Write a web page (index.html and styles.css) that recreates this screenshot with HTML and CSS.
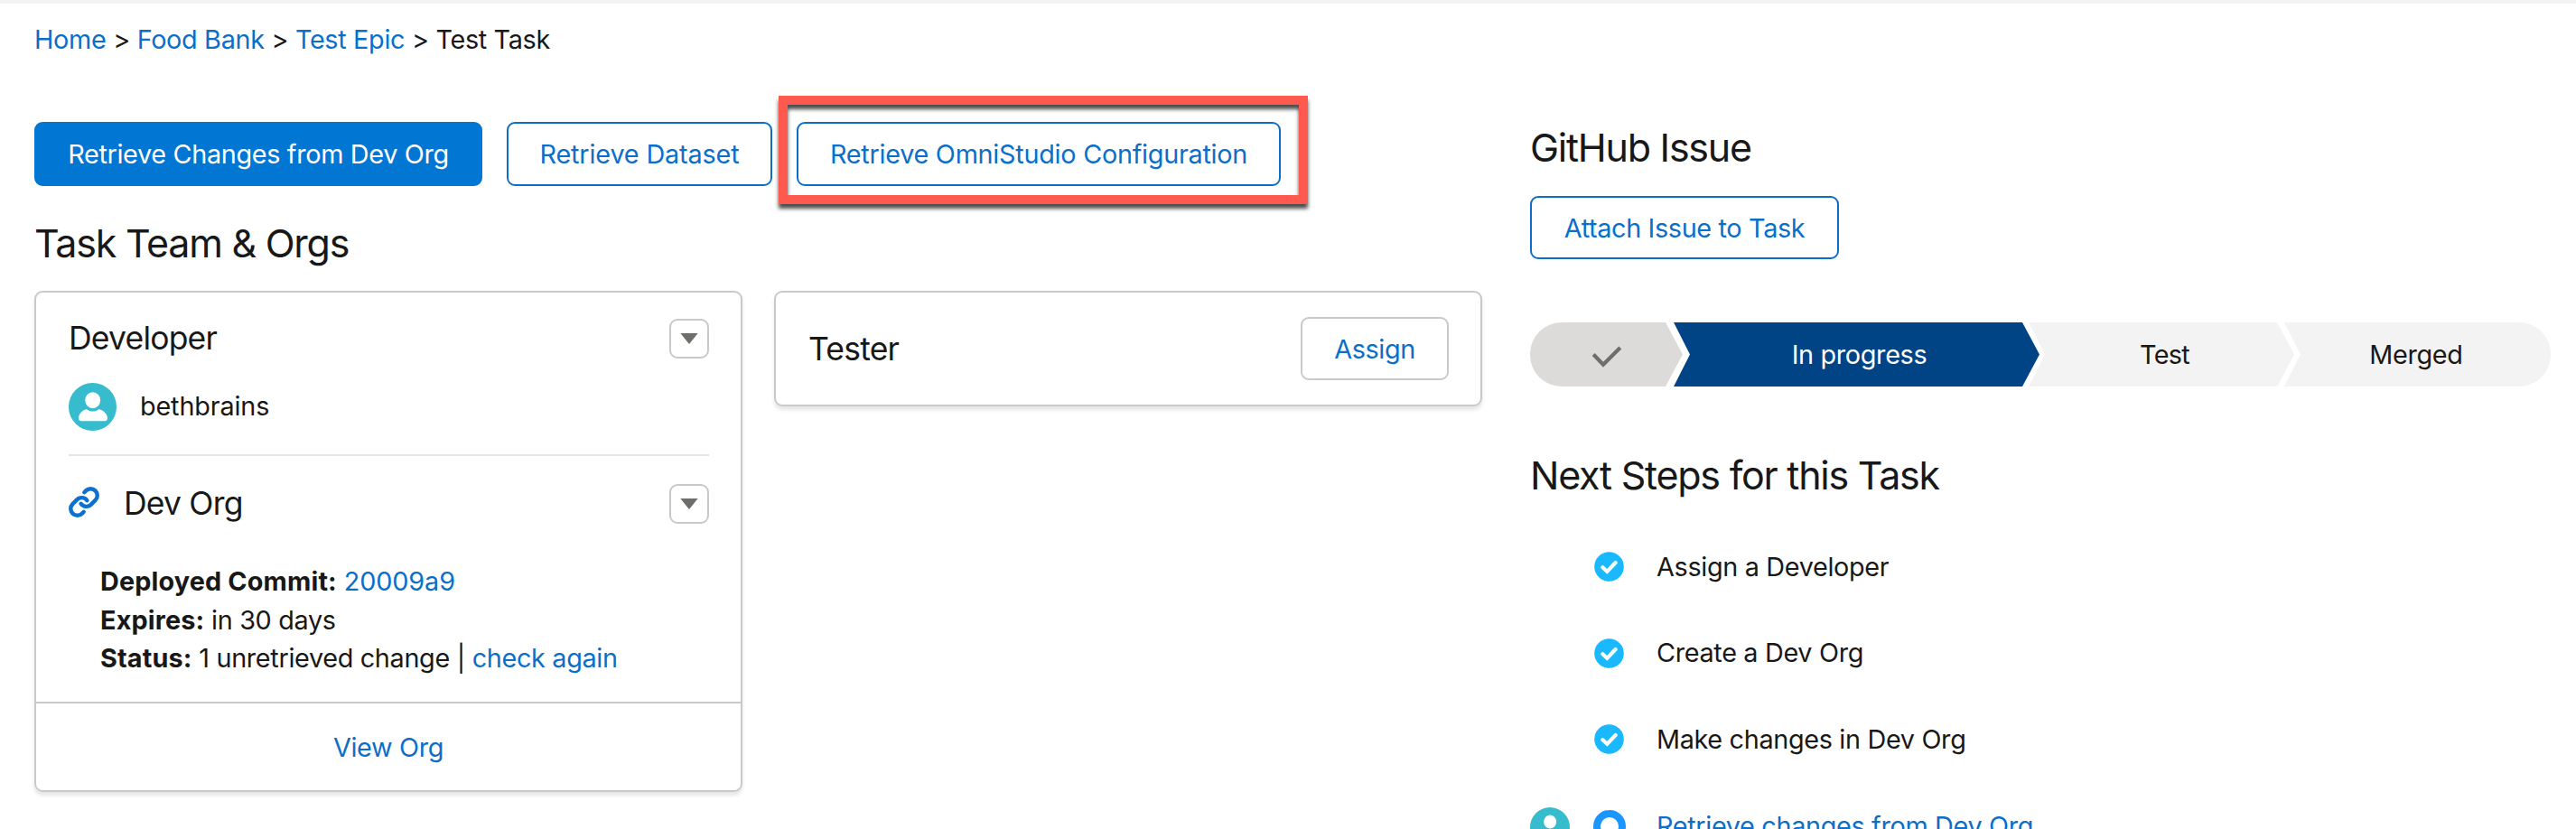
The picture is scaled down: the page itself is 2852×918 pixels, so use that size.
FILE: index.html
```
<!DOCTYPE html>
<html lang="en">
<head>
<meta charset="utf-8">
<title>Test Task</title>
<link rel="stylesheet" href="styles.css">
</head>
<body>
<svg class="defs" width="0" height="0">
  <symbol id="user" viewBox="0 0 53 53">
    <circle cx="26.5" cy="26.5" r="26.5" fill="#36bccc"/>
    <ellipse cx="26.7" cy="19.2" rx="8.4" ry="9" fill="#fff"/>
    <path d="M18.5 29.4c1.2-.4 2 0 2.8.5 3.300 2 7.500 2 10.800 0 .8-.5 1.600-.9 2.800-.5 4.600 1.500 8.100 5.800 8.100 9.700 0 2-1 3.200-2.800 3.200H13.800c-1.800 0-2.800-1.200-2.800-3.200 0-3.900 3.100-8.200 7.500-9.700z" fill="#fff"/>
  </symbol>
  <symbol id="done" viewBox="0 0 33 33">
    <circle cx="16.500" cy="16.500" r="16.300" fill="#1ab9ff"/>
    <path d="M9.400 17.300l4.900 4.600 9.300-9.900" fill="none" stroke="#fff" stroke-width="4.200" stroke-linecap="round"/>
  </symbol>
  <symbol id="down" viewBox="0 0 20 12">
    <path d="M.3 0h19.400L10 12z" fill="#706e6b"/>
  </symbol>
</svg>
<main class="page">
  <section class="left">
    <nav class="crumbs"><a>Home</a> &gt; <a>Food Bank</a> &gt; <a>Test Epic</a> &gt; Test Task</nav>
    <div class="actions">
      <button class="btn brand retrieve">Retrieve Changes from Dev Org</button>
      <button class="btn outline dataset">Retrieve Dataset</button>
      <div class="marked">
        <button class="btn outline omni">Retrieve OmniStudio Configuration</button>
        <span class="marker"></span>
      </div>
    </div>
    <h2 class="team-title">Task Team &amp; Orgs</h2>
    <div class="cards">
      <article class="card">
        <div class="card-body">
          <header class="row">
            <h3>Developer</h3>
            <button class="menu"><svg width="20" height="12"><use href="#down"/></svg></button>
          </header>
          <div class="person">
            <svg width="53" height="53"><use href="#user"/></svg>
            <span>bethbrains</span>
          </div>
          <hr class="rule">
          <header class="row">
            <svg class="link-icon" width="34" height="34" viewBox=".5 .5 23 23"><g fill="none" stroke="#0b70cf" stroke-width="3" stroke-linecap="round"><path d="M9.700 13.200a5 5 0 0 0 7.800.4l3-3a5 5 0 0 0-7.100-7.100l-1.200 1.200"/><path d="M14.300 10.800a5 5 0 0 0-7.800-.4l-3 3a5 5 0 0 0 7.100 7.100l1.200-1.200"/></g></svg>
            <h3 class="org-name">Dev Org</h3>
            <button class="menu"><svg width="20" height="12"><use href="#down"/></svg></button>
          </header>
          <ul class="details">
            <li><strong>Deployed Commit:</strong> <a class="sha">20009a9</a></li>
            <li><strong>Expires:</strong> in 30 days</li>
            <li><strong>Status:</strong> 1 unretrieved change | <a>check again</a></li>
          </ul>
        </div>
        <footer class="card-foot"><a>View Org</a></footer>
      </article>
      <article class="card tester">
        <h3>Tester</h3>
        <button class="btn neutral">Assign</button>
      </article>
    </div>
  </section>
  <aside class="right">
    <h2 class="issue-title">GitHub Issue</h2>
    <button class="btn outline attach">Attach Issue to Task</button>
    <div class="path">
      <div class="stage complete"><svg width="34" height="26" viewBox="0 0 34 26"><path d="M2.200 10.500L13 21.800 31.800 3" fill="none" stroke="#706e6b" stroke-width="4.200"/></svg></div>
      <div class="stage current">In progress</div>
      <div class="stage test">Test</div>
      <div class="stage merged">Merged</div>
    </div>
    <h2 class="steps-title">Next Steps for this Task</h2>
    <ol class="steps">
      <li><span class="who"></span><span class="mark"><svg width="33" height="33"><use href="#done"/></svg></span>Assign a Developer</li>
      <li><span class="who"></span><span class="mark"><svg width="33" height="33"><use href="#done"/></svg></span>Create a Dev Org</li>
      <li><span class="who"></span><span class="mark"><svg width="33" height="33"><use href="#done"/></svg></span>Make changes in Dev Org</li>
      <li class="next"><span class="who"><svg width="44" height="44"><use href="#user"/></svg></span><span class="mark ring"></span><a>Retrieve changes from Dev Org</a></li>
    </ol>
  </aside>
</main>
</body>
</html>
```
FILE: styles.css
```
* { box-sizing: border-box; }
body {
  margin: 0;
  height: 918px;
  overflow: hidden;
  background: #fff;
  color: #181818;
  font: 28.8px/44px Inter, "Liberation Sans", sans-serif;
  letter-spacing: -0.33px;
}
.defs { position: absolute; }
svg { display: block; flex: none; }
a { color: #0b6fc9; }
h2, h3, ul, ol { margin: 0; padding: 0; font-weight: 400; list-style: none; }
h2 { font-size: 43px; line-height: 54px; letter-spacing: -1.25px; }
h3 { font-size: 35.5px; line-height: 44px; letter-spacing: -0.8px; }

.page {
  display: flex;
  height: 918px;
  overflow: hidden;
  border-top: 4px solid #f3f3f3;
  padding-left: 38px;
}
.left { width: 1656px; flex: none; padding-top: 18px; }
.right { width: 1130px; flex: none; padding-top: 132px; }

.crumbs { white-space: nowrap; }
.actions { display: flex; gap: 27px; margin-top: 69px; }
.btn {
  display: block;
  height: 71px;
  padding: 0;
  border: 2px solid #0b6fc9;
  border-radius: 9px;
  background: #fff;
  color: #0b6fc9;
  font: inherit;
  letter-spacing: inherit;
  text-align: center;
  white-space: nowrap;
}
.brand { background: #0176d3; border-color: #0176d3; color: #fff; }
.retrieve { width: 496px; }
.dataset { width: 294px; letter-spacing: -0.15px; }
.omni { width: 536px; letter-spacing: -0.26px; }
.marked { position: relative; }
.marker {
  position: absolute;
  left: -20px;
  top: -29px;
  width: 586px;
  height: 120px;
  border: 10px solid #ff5a4d;
  filter: drop-shadow(0 5px 2px rgba(0, 0, 0, 0.7));
}

.team-title { margin-top: 36px; }
.cards { display: flex; align-items: flex-start; gap: 35px; margin-top: 26px; }
.card {
  width: 784px;
  border: 2px solid #c9c9c9;
  border-radius: 9px;
  box-shadow: 0 4px 4px rgba(0, 0, 0, 0.1);
}
.card-body { padding: 29px 35px 26px 36px; }
.row { display: flex; align-items: center; height: 44px; }
.menu {
  display: flex;
  align-items: center;
  justify-content: center;
  width: 44px;
  height: 44px;
  margin-left: auto;
  padding: 0;
  border: 2px solid #c9c9c9;
  border-radius: 9px;
  background: #fff;
}
.person { display: flex; align-items: center; gap: 26px; height: 53px; margin-top: 27px; letter-spacing: -0.15px; }
.person span { margin-top: -2px; }
.rule { height: 2px; margin: 26px 0 31px; border: 0; background: #e5e5e5; }
.link-icon { margin-top: -4px; }
.row .org-name { margin: -1px 0 0 27px; }
.details { margin-top: 43px; padding-left: 35px; line-height: 42.5px; }
.details strong { letter-spacing: 0.15px; }
.sha { letter-spacing: -0.1px; }
.card-foot { border-top: 2px solid #c9c9c9; height: 98px; line-height: 97px; text-align: center; }
.tester { display: flex; align-items: center; justify-content: space-between; height: 128px; padding: 0 35px 0 36px; }
.tester h3 { margin-top: 1px; }
.neutral { width: 164px; height: 70px; padding-top: 1px; border-color: #c9c9c9; letter-spacing: -0.4px; }

.attach { width: 342px; height: 70px; margin-top: 27px; padding-top: 1px; letter-spacing: -0.35px; }
.path { display: flex; height: 71px; margin-top: 70px; }
.stage {
  display: flex;
  align-items: center;
  justify-content: center;
  flex: none;
  background: #f3f3f3;
  clip-path: polygon(0 0, calc(100% - 19px) 0, 100% 50%, calc(100% - 19px) 100%, 0 100%, 18px 50%);
}
.complete {
  width: 169px;
  border-radius: 35px 0 0 35px;
  background: #dddbda;
  clip-path: polygon(0 0, calc(100% - 19px) 0, 100% 50%, calc(100% - 19px) 100%, 0 100%);
}
.complete svg { margin-top: 5px; }
.current { width: 405px; margin-left: -10px; padding-left: 6px; background: #014486; color: #fff; }
.test { width: 294px; margin-left: -12px; padding-left: 7px; letter-spacing: -0.7px; }
.merged {
  width: 295px;
  margin-left: -11px;
  padding-right: 3px;
  border-radius: 0 35px 35px 0;
  clip-path: polygon(0 0, 100% 0, 100% 100%, 0 100%, 18px 50%);
}
.steps-title { margin-top: 71px; }
.steps { margin-top: 27px; }
.steps li { display: flex; align-items: center; height: 95.5px; white-space: nowrap; }
.who { width: 44px; margin: 4px 26px 0 0; }
.mark { display: flex; width: 36px; height: 33px; padding-left: 1px; margin-right: 34px; }
.ring { height: 36px; border: 8px solid #1b96ff; border-radius: 50%; margin-top: 2px; }
.next a { margin-top: 2px; }
```
